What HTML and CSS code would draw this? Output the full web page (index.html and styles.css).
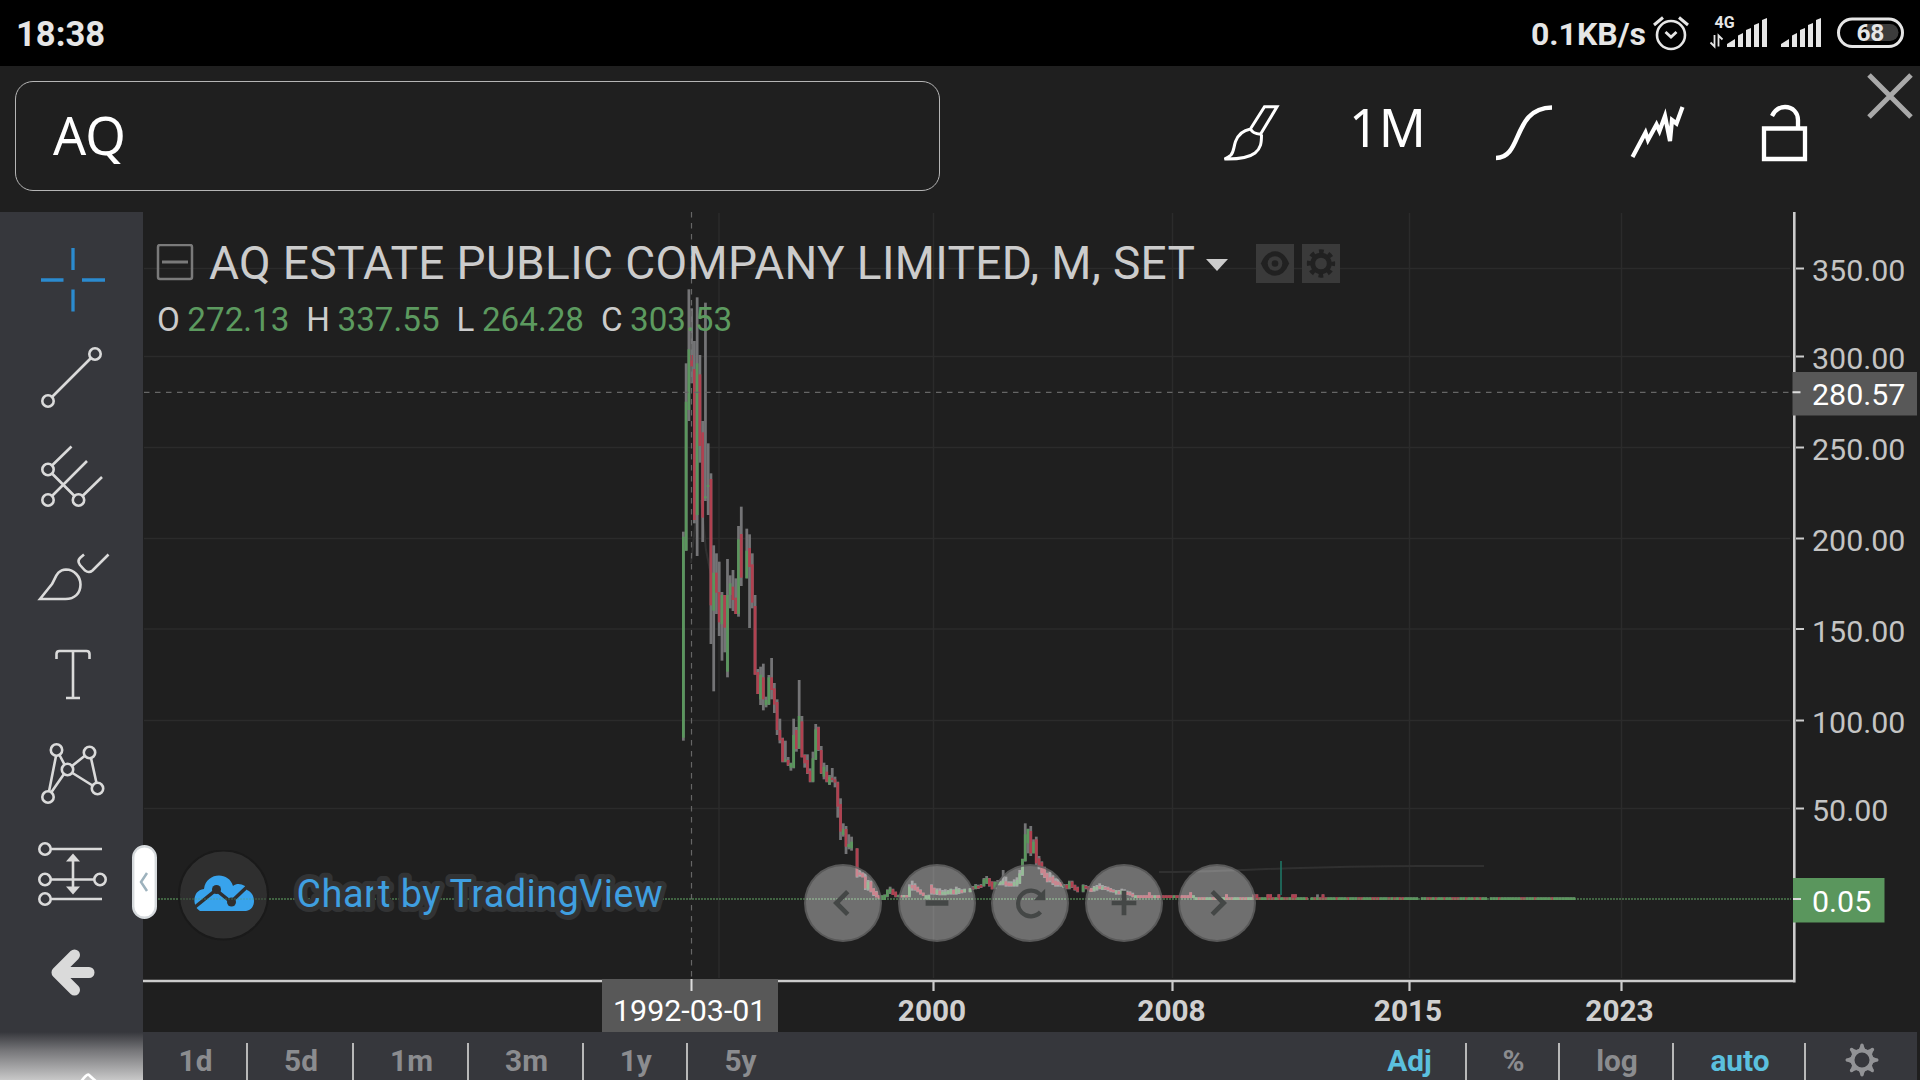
FILE: index.html
```html
<!DOCTYPE html>
<html lang="en">
<head>
<meta charset="utf-8">
<title>AQ Chart</title>
<link rel="stylesheet" href="styles.css">
</head>
<body>
<div class="status-bar">
  <span class="clock">18:38</span>
  <div class="status-right">
    <span class="net-speed">0.1KB/s</span>
    <svg class="status-icons" viewBox="1650 0 270 66" width="270" height="66">
      <g fill="none" stroke="#e6e6e6">
        <circle cx="1671" cy="35" r="14" stroke-width="2.6"/>
        <path d="M1665.500 32l5.500 5 5.500-5" stroke-width="2.8"/>
        <path d="M1654 25l9-7.500M1688 25l-9-7.500" stroke-width="3"/>
        <path d="M1714.500 35v11.500l-4-4M1718.500 46.500v-11l4 4" stroke-width="1.800"/>
        <rect x="1838.500" y="19" width="64" height="27.500" rx="13.700" stroke-width="3"/>
      </g>
      <text x="1714.500" y="28" class="net-type">4G</text>
      <g fill="#e6e6e6">
        <path d="M1727 47v-3l8-5v8zM1738 47V35.500l5-2.500v14zM1746 47V30l5-2v19zM1754 47V25l5-2v24zM1762 47V20l5-2v29z"/>
        <path d="M1781 47v-3l8-5v8zM1792 47V35.500l5-2.500v14zM1800 47V30l5-2v19zM1808 47V25l5-2v24zM1816 47V20l5-2v29z"/>
      </g>
      <path d="M1866 24h24a8.500 8.500 0 0 1 0 17h-24z" fill="#3c3c3c"/>
      <text x="1856.500" y="41" class="battery">68</text>
    </svg>
  </div>
</div>

<header class="top-bar">
  <div class="symbol-search">AQ</div>
  <div class="top-tools">
    <svg viewBox="1190 66 130 146" width="130" height="146">
      <path d="M1264.500 106.800h12.500l-16.500 27.500q-8-.5-10-5.500zM1250.500 129q-11 2-15 12.500c-2 6-1.500 10-4.500 13.500q-2 2-6.500 4 22 .5 30.500-6c6-5 6.500-10 6.500-18.500" class="tool-stroke" stroke-width="3"/>
    </svg>
    <span class="interval">1M</span>
    <svg viewBox="1455 66 465 146" width="465" height="146">
      <path d="M1496 158c27 0 16-50 56-50.500" class="tool-stroke" stroke-width="4.500"/>
      <path d="M1632.500 157l13-24.500 2.500 7.500 8.500-15.500 3 6.500 5.500-15 5 25 2-21 4.500 3.500 6-16.500" class="tool-stroke" stroke-width="4.200"/>
      <path d="M1764 128.500h41v30.500h-41zM1772 116c3-6 7-9 13-9 8 0 13 6 13 13v9" class="tool-stroke" stroke-width="4.300"/>
      <path d="M1869 75l42 42M1911 75l-42 42" class="close-stroke"/>
    </svg>
  </div>
</header>

<div class="workspace">
  <nav class="draw-tools">
    <svg viewBox="0 231 143 99" class="active"><path d="M73 248v22M73 289.500v22M41 280h22.500M82 280h23" stroke-width="3.300"/></svg>
    <svg viewBox="0 330 143 99"><circle cx="95" cy="354" r="5.700"/><circle cx="48" cy="401" r="5.700"/><path d="M91 358l-39 39"/></svg>
    <svg viewBox="0 429 143 99"><circle cx="48" cy="469.500" r="5.700"/><circle cx="48" cy="500" r="5.700"/><circle cx="78.500" cy="500" r="5.700"/><path d="M52 465.500l19.500-19M52 473.500l22.500 22.500M52 496l35-35M82.500 496l19.500-19"/></svg>
    <svg viewBox="0 528 143 99"><path d="M40 599l12-15c4-7 5-14 14-14.500 8 0 14.500 7 14.500 15 0 9-6 14.500-15 14.500zM84 554.500l-4 3.500q-3 3 0 7l5 5.500q4 3 7.500 0l16-16"/></svg>
    <svg viewBox="0 627 143 99"><path d="M56.500 659v-5q0-3 3-3h27q3 0 3 3v5M73 651v47M66 698h14"/></svg>
    <svg viewBox="0 726 143 99"><circle cx="56.500" cy="750" r="5.700"/><circle cx="89.500" cy="752.500" r="5.700"/><circle cx="67.500" cy="769.500" r="5.700"/><circle cx="97.500" cy="788.500" r="5.700"/><circle cx="48" cy="797" r="5.700"/><path d="M56 756l-7 35.500M59.500 755l5 9.500M84.500 756l-12.500 10M91 758l5.500 25M72.500 773l20 12.500M64 774l-12.500 18"/></svg>
    <svg viewBox="0 825 143 99"><circle cx="45" cy="849" r="5.700"/><circle cx="45" cy="879.500" r="5.700"/><circle cx="100" cy="879.500" r="5.700"/><circle cx="45" cy="899" r="5.700"/><path d="M51 849h51M51 879.500h43M51 899h51M73 857v34"/><path d="M73 853.500l7 8H66zM73 894.500l7-8H66z" class="solid"/></svg>
    <svg viewBox="0 924 143 99"><path d="M74.500 955l-17.500 17.500 17.500 17.500M61 972.500h28" stroke-width="11" stroke-linecap="round" stroke-linejoin="round" class="back"/></svg>
    <svg viewBox="0 1023 143 57" class="fade"><path d="M80 1083q7-10 9-8t9 8" stroke="#fff"/></svg>
  </nav>

  <main class="main-pane">
    <section class="chart">
      <svg class="plot" viewBox="143 212 1777 820" width="1777" height="820">
        <path class="grid" d="M144 268.500H1790M144 356.500H1790M144 447.500H1790M144 538.500H1790M144 629H1790M144 720.500H1790M144 808.500H1790M719 213V978M933.500 213V978M1172.500 213V978M1409.500 213V978M1621.500 213V978"/>
        <path class="guide" d="M1159 872C1230 872 1290 866 1420 866H1484M691 563l5-45M701 500l5 50 5 25"/>
        <g id="bars"></g>
        <path d="M1281 861v34" stroke="#1f7565" stroke-width="1.600"/>
        <path class="cross" d="M691.500 212V978"/>
        <path class="cross" d="M144 392.300H1792"/>
        <path class="last-price" d="M143 899H1791"/>
        <path class="axis" d="M143 981H1795.500M1794.300 212V982.500"/>
        <path class="tick" d="M1796 268.500h8M1796 356.500h8M1796 447.500h8M1796 538.500h8M1796 629h8M1796 720.500h8M1796 808.500h8M933.500 982v9M1172.500 982v9M1409.500 982v9M1621.500 982v9"/>
        <g class="price">
          <text x="1812" y="281">350.00</text><text x="1812" y="369">300.00</text><text x="1812" y="460">250.00</text><text x="1812" y="551">200.00</text><text x="1812" y="642">150.00</text><text x="1812" y="733">100.00</text><text x="1812" y="821">50.00</text>
        </g>
        <g class="year"><text x="932" y="1021">2000</text><text x="1171.500" y="1021">2008</text><text x="1408" y="1021">2015</text><text x="1619.500" y="1021">2023</text></g>
        <path fill="#585858" d="M1792.500 372h124.500v43.500h-124.500zM602 979h176v53H602z"/>
        <path fill="#5a965d" d="M1793 878h91.500v44.500H1793z"/>
        <path stroke="#ddd" stroke-width="2" d="M1792.500 392.300h8M1793 899h8M691.500 979v12"/>
        <g class="tag"><text x="1812" y="405">280.57</text><text x="1812" y="911.500">0.05</text><text x="613" y="1021">1992-03-01</text></g>
      </svg>

      <div class="legend">
        <div class="legend-title">
          <svg viewBox="156 242 38 38" width="38" height="38"><rect x="158" y="243" width="34" height="34" rx="2" fill="none" stroke="#7a7a7a" stroke-width="2.500"/><path d="M162 260h26" stroke="#7a7a7a" stroke-width="3"/></svg>
          <span class="name">AQ ESTATE PUBLIC COMPANY LIMITED, M, SET</span>
          <svg class="caret" viewBox="0 0 22 12" width="22" height="12"><path d="M0 0h22L11 12z" fill="#ccc"/></svg>
          <svg class="mini" viewBox="0 0 39 39"><path d="M5 19.500Q10 7 19.500 7T34 19.500Q29 32 19.500 32T5 19.500z" fill="#212121"/><circle cx="19.500" cy="19.500" r="7.500" fill="#3a3a3a"/><circle cx="19.500" cy="19.500" r="3.400" fill="#212121"/></svg>
          <svg class="mini" viewBox="0 0 39 39"><g fill="none" stroke="#212121"><circle cx="19.500" cy="19.500" r="8.500" stroke-width="5"/><circle cx="19.500" cy="19.500" r="12.500" stroke-width="4" stroke-dasharray="4.900 4.917" stroke-dashoffset="2.450"/></g></svg>
        </div>
        <div class="ohlc"><span>O</span><b>272.13</b><span>H</span><b>337.55</b><span>L</span><b>264.28</b><span>C</span><b>303.53</b></div>
      </div>

      <div class="credit">
        <svg viewBox="178 850 91 91" width="91" height="91">
          <circle cx="223.500" cy="895" r="44.500" fill="#2f2f2f" stroke="#1a1a1a" stroke-width="2"/>
          <path d="M200 911c-8-4-8-21 4-22 2-17 25-18 29-3 4-3 8-2 12 0l2 4c9 3 10 19-1 21z" fill="#38a3ec"/>
          <path d="M195 907l21-17 15 12 18-17" fill="none" stroke="#2f2f2f" stroke-width="3.500"/>
          <circle cx="216.500" cy="889.500" r="4.500" fill="#2f2f2f"/><circle cx="231.500" cy="902" r="4.500" fill="#2f2f2f"/>
          <path d="M180 899h87" stroke="#5c9b5f" stroke-opacity=".5" stroke-dasharray="2 1"/>
        </svg>
        <svg class="credit-text" viewBox="286 850 390 91" width="390" height="91"><text x="296.500" y="906.500" textLength="366">Chart by TradingView</text></svg>
      </div>

      <div class="nav-buttons">
        <svg viewBox="-39 -39 78 78"><path d="M5-12L-7 0 5 12"/></svg>
        <svg viewBox="-39 -39 78 78"><path d="M-12 0h24" stroke-width="6"/></svg>
        <svg viewBox="-39 -39 78 78"><path d="M11 9.500a13.500 13.500 0 1 1 0-18" stroke-width="4.500"/><path d="M16-15V-3H4z" class="head"/></svg>
        <svg viewBox="-39 -39 78 78"><path d="M-13 0h26M0-13v26" stroke-width="5"/></svg>
        <svg viewBox="-39 -39 78 78"><path d="M-5-12L7 0-5 12"/></svg>
      </div>
      <svg class="drawer-handle" viewBox="0 0 25 74"><rect x="1.200" y="1.200" width="22.600" height="71.600" rx="11.300" fill="#fff" stroke="#d6dadd" stroke-width="2.400"/><path d="M15 28l-6 9 6 9" fill="none" stroke="#9db2bd" stroke-width="2.500"/></svg>
    </section>

    <footer class="range-bar">
      <div class="ranges"><span>1d</span><span>5d</span><span>1m</span><span>3m</span><span>1y</span><span>5y</span></div>
      <div class="scales"><span class="on">Adj</span><span>%</span><span>log</span><span class="on">auto</span>
        <span><svg viewBox="-17 -17 34 34" width="34" height="34"><circle r="9.500" fill="none" stroke="#929396" stroke-width="4"/><path id="cog" d="M0-16.500q1.800 0 2 3L4-9h-8l2-4.500q.2-3 2-3z" fill="#929396"/><g fill="#929396"><use href="#cog" transform="rotate(45)"/><use href="#cog" transform="rotate(90)"/><use href="#cog" transform="rotate(135)"/><use href="#cog" transform="rotate(180)"/><use href="#cog" transform="rotate(225)"/><use href="#cog" transform="rotate(270)"/><use href="#cog" transform="rotate(315)"/></g></svg></span></div>
    </footer>
  </main>
</div>
<script src="chart.js"></script>
</body>
</html>
```
FILE: styles.css
```css
* { box-sizing: border-box; }
body { margin: 0; width: 1920px; height: 1080px; overflow: hidden; background: #1f1f1f; color: #ccc; font-family: Roboto, sans-serif; }
svg { display: block; flex: none; }

.status-bar { height: 66px; background: #000; display: flex; justify-content: space-between; align-items: center; padding-left: 16px; color: #e6e6e6; font-weight: 700; }
.clock { font-size: 34.6px; line-height: 66px; padding-top: 2px; }
.status-right { display: flex; align-items: center; }
.net-speed { font-size: 32px; line-height: 66px; padding: 2px 4px 0 0; }
.net-type { font-size: 16px; fill: #e6e6e6; }
.battery { font-size: 24.5px; letter-spacing: -.4px; fill: #e6e6e6; }

.top-bar { height: 146px; display: flex; justify-content: space-between; color: #fff; font-family: "Noto Sans", sans-serif; font-size: 52px; }
.symbol-search { width: 925px; height: 110px; margin: 15px 0 0 15px; padding-left: 37px; border: 1.5px solid #b5b5b5; border-radius: 18px; line-height: 106px; }
.top-tools { display: flex; }
.interval { width: 135px; padding-left: 29px; line-height: 122px; }
.tool-stroke { fill: none; stroke: #fff; }
.close-stroke { fill: none; stroke: #a9a9a9; stroke-width: 5; }

.workspace { display: grid; grid-template-columns: 143px 1777px; height: 868px; }
.draw-tools { background: #36373c; padding-top: 19px; display: flex; flex-direction: column; }
.draw-tools svg { width: 143px; height: 99px; fill: none; stroke: #dadada; stroke-width: 2.6; }
.draw-tools .active { stroke: #2b8bcf; }
.draw-tools .solid { fill: #dadada; stroke: none; }
.draw-tools .fade { height: 57px; background: linear-gradient(#36373c 9px, #77777a 28px, #c8c8c8 57px); }

.main-pane { display: grid; grid-template-rows: 820px 48px; }
.chart { position: relative; }
.grid { fill: none; stroke: #2b2b2b; stroke-width: 1.5; }
.guide { fill: none; stroke: #303030; stroke-width: 2; }
.cross { fill: none; stroke: #666; stroke-width: 1.2; stroke-dasharray: 5.5 5.5; }
.last-price { fill: none; stroke: #5c9b5f; stroke-width: 1.5; stroke-dasharray: 2 1; opacity: .75; }
.axis { fill: none; stroke: #ccc; stroke-width: 2.6; }
.tick { stroke: #ccc; stroke-width: 2.2; }
.price, .tag { font-size: 30.4px; fill: #c4c4c4; }
.tag { fill: #fff; }
.year { font-size: 29.8px; font-weight: 700; fill: #d0d0d0; text-anchor: middle; }

.legend { position: absolute; left: 13px; top: 23px; }
.legend-title { display: flex; align-items: center; height: 56px; }
.name { font-size: 46px; line-height: 56px; letter-spacing: .35px; white-space: nowrap; width: 1012px; padding-left: 15px; }
.caret { margin: 4px 28px 0 0; }
.mini { width: 38px; height: 39px; background: #3a3a3a; margin-right: 8px; }
.ohlc { display: flex; font-size: 33.2px; line-height: 40px; padding: 9px 0 0 1px; }
.ohlc b { font-weight: 400; color: #5c9a5f; margin: 0 17px 0 7.5px; }

.credit { position: absolute; left: 35px; top: 638px; display: flex; align-items: center; gap: 17px; }
.credit-text { font-size: 38px; fill: #3f9fe0; stroke: #323334; stroke-width: 10px; stroke-linejoin: round; paint-order: stroke fill; }
.nav-buttons { position: absolute; left: 661px; top: 651.5px; display: flex; gap: 15.5px; }
.nav-buttons svg { width: 78px; height: 78px; border-radius: 50%; background: rgba(255, 255, 255, .36); border: 2px solid rgba(80, 80, 80, .7); fill: none; stroke: #444746; stroke-width: 5; }
.nav-buttons .head { fill: #444746; stroke: none; }
.drawer-handle { position: absolute; left: -11px; top: 633px; width: 25px; height: 74px; }

.range-bar { width: 1774px; background: #36373c; display: flex; justify-content: space-between; padding-top: 11px; font-size: 29.8px; font-weight: 700; color: #8b8c8f; line-height: 36px; }
.ranges, .scales { display: flex; }
.ranges span, .scales span { height: 37px; border-right: 2px solid #b8b8b8; text-align: center; padding-left: 2px; }
.ranges span:nth-child(1) { width: 105px; }
.ranges span:nth-child(2) { width: 106px; }
.ranges span:nth-child(3) { width: 115px; }
.ranges span:nth-child(4) { width: 115px; }
.ranges span:nth-child(5) { width: 103.5px; }
.ranges span:nth-child(6) { width: 106px; border: 0; padding-left: 0; }
.scales span:nth-child(1) { width: 115px; }
.scales span:nth-child(2) { width: 93px; }
.scales span:nth-child(3) { width: 114px; }
.scales span:nth-child(4) { width: 132px; }
.scales span:nth-child(5) { width: 111px; border: 0; padding: 0; display: flex; justify-content: center; }
.scales .on { color: #5bc0de; }
```
FILE: chart.js
```js
// Monthly bars: [slot, direction, high, body top, body bottom, low], in thirds of a pixel above y = 640.
const bars = [
  [0,'g',-325,-310,293,302],[1,'g',-830,-715,-268,-268],[2,'g',-1052,-872,-690,-657],[3,'r',-995,-855,-820,-770],
  [4,'r',-897,-813,-360,-350],[5,'g',-1028,-830,-375,-252],[6,'r',-855,-797,-582,-532],[7,'r',-657,-623,-367,-294],
  [8,'g',-1012,-431,-425,-417],[9,'g',-590,-465,-459,-375],[10,'r',-500,-483,-104,12],[11,'g',-284,-202,-88,154],
  [12,'r',-260,-202,-142,-78],[13,'r',-235,-144,-53,-12],[14,'g',-144,-135,-47,62],[15,'r',-135,-135,-37,37],
  [16,'g',-243,-135,95,112],[17,'g',-194,-170,-135,-95],[18,'r',-210,-160,-120,-87],[19,'r',-185,-127,-78,-78],
  [20,'g',-342,-302,-78,-70],[21,'r',-400,-318,-187,-162],[23,'g',-334,-268,-185,-185],[24,'r',-317,-276,-219,-36],
  [25,'r',-260,-227,-112,-95],[26,'r',-135,-102,104,104],[27,'r',87,96,162,162],[28,'g',80,104,178,195],
  [29,'r',71,112,178,211],[30,'g',170,180,196,202],[31,'g',105,112,193,195],[32,'r',54,112,150,178],
  [33,'r',129,145,194,219],[34,'r',178,186,270,285],[35,'r',236,270,301,310],[36,'r',293,295,365,367],
  [37,'g',302,358,364,367],[38,'r',351,360,376,378],[39,'g',368,370,383,392],[40,'g',236,285,383,385],
  [41,'r',261,270,327,335],[42,'g',120,228,325,327],[43,'r',228,244,352,352],[44,'r',343,345,370,383],
  [45,'r',343,360,400,402],[46,'r',385,392,425,427],[47,'g',335,355,425,427],[48,'g',252,268,358,360],
  [49,'r',260,262,330,333],[50,'r',318,330,400,402],[51,'g',368,380,410,418],[52,'r',375,395,425,427],
  [53,'g',405,410,433,435],[54,'r',384,413,420,427],[55,'r',410,418,428,442],[56,'r',425,427,500,533],
  [57,'r',475,492,575,600],[58,'g',550,567,585,590],[59,'r',558,567,620,642],[60,'g',583,612,622,628],
  [61,'g',590,605,625,632],[63,'r',625,625,710,713],[64,'r',690,697,705,710],[65,'r',697,700,712,712],
  [66,'r',700,710,745,750],[67,'g',720,725,748,752],[68,'r',722,725,755,757],[69,'r',745,745,765,768],
  [70,'r',753,755,772,772],[71,'r',765,765,777,777],[72,'g',766,766,780,780],[73,'g',763,765,780,780],
  [74,'g',748,750,770,772],[75,'g',740,745,758,762],[76,'r',746,748,765,765],[77,'r',755,755,770,772],
  [78,'g',764,766,771,772],[79,'r',765,766,772,772],[80,'g',765,766,772,772],[81,'r',765,766,772,772],
  [82,'g',733,740,770,772],[83,'r',722,735,745,752],[84,'r',730,735,750,752],[85,'r',740,742,755,757],
  [86,'r',748,750,762,764],[87,'r',758,758,768,768],[88,'g',766,766,776,778],[89,'g',764,766,778,778],
  [90,'r',733,735,760,764],[91,'r',743,745,762,764],[92,'g',745,750,762,765],[93,'r',745,752,764,766],
  [94,'g',750,755,764,766],[95,'g',748,755,764,766],[96,'g',750,752,762,764],[97,'g',746,748,762,764],
  [98,'r',748,750,762,764],[99,'g',740,746,762,764],[100,'g',744,748,758,762],[101,'r',748,750,758,760],
  [102,'g',746,748,756,758],[104,'g',744,746,756,757],[105,'r',738,742,748,750],[106,'g',732,736,746,748],
  [107,'r',734,738,745,747],[108,'r',732,735,742,744],[109,'g',714,718,738,740],[110,'g',708,714,730,732],
  [111,'r',714,715,738,740],[112,'r',724,725,748,748],[113,'g',724,726,745,747],[114,'g',720,726,734,736],
  [115,'g',722,726,734,736],[116,'g',690,722,732,736],[117,'r',710,724,736,740],[118,'r',724,728,738,740],
  [119,'r',724,730,738,740],[120,'g',718,726,738,740],[121,'g',712,720,736,740],[122,'g',690,700,730,732],
  [123,'g',656,657,705,708],[124,'g',550,583,663,665],[125,'g',566,567,610,640],[126,'r',558,573,640,648],
  [127,'g',598,605,640,640],[128,'r',590,598,670,675],[129,'r',648,655,680,688],[130,'r',664,667,700,705],
  [131,'r',680,685,712,714],[132,'r',698,700,725,727],[133,'r',695,712,722,727],[134,'r',706,710,730,735],
  [135,'r',715,722,736,740],[136,'r',716,725,735,740],[137,'r',726,728,738,740],[138,'g',732,735,742,744],
  [139,'r',732,735,746,748],[140,'g',722,725,745,748],[141,'r',722,725,742,744],[142,'r',734,735,750,752],
  [143,'r',740,742,755,757],[145,'g',733,735,755,757],[146,'r',735,738,745,748],[147,'r',738,740,752,755],
  [148,'r',744,745,755,756],[149,'g',738,742,752,755],[150,'g',735,740,748,752],[151,'r',730,738,746,748],
  [152,'g',735,740,748,750],[153,'r',738,742,748,750],[154,'r',740,742,750,754],[155,'r',744,746,754,757],
  [156,'r',748,750,756,758],[157,'g',750,752,760,764],[158,'r',750,754,762,764],[159,'g',746,752,762,764],
  [160,'r',748,754,762,764],[161,'r',752,756,764,765],[162,'r',754,757,765,767],[163,'r',758,762,770,772]
];
// The flat years: slots whose bar is down, and slots that tick up one step.
const down = [216, 218, 219, 221, 222, 226, 229, 231, 232, 233, 237, 241, 245, 246, 250, 251, 252, 256, 258, 260, 261, 270, 271, 273, 276, 279, 280, 281, 284, 287, 289, 296, 304, 305, 309, 315];
const steps = [169, 184, 197, 207, 208, 212, 213, 216, 221, 222, 230, 232];
for (let i = 164; i < 324; i++) {
  if ([227, 267, 292].includes(i)) continue;
  const low = i < 186 ? 766 : 772;
  const red = i < 182 ? i % 7 !== 3 : i < 216 ? i % 5 > 1 : down.includes(i);
  const spike = steps.includes(i) ? 9 : 0;
  bars.push([i, red ? 'r' : 'g', low - spike, low - (red ? spike : 0), low + 8, low + 8]);
}
const color = { g: '#5a965d', r: '#b04150' };
const rect = (x, a, b, fill) =>
  `<rect x="${x.toFixed(2)}" y="${(640 + a / 3).toFixed(2)}" width="2.76" height="${Math.max((b - a) / 3, 1).toFixed(2)}" fill="${fill}"/>`;
document.getElementById('bars').innerHTML = bars.map(([i, d, h, t, b, l]) => {
  const x = 682 + i * 2.757;
  return rect(x, h, l, '#747476') + rect(x, t, b, color[d]);
}).join('');
```
